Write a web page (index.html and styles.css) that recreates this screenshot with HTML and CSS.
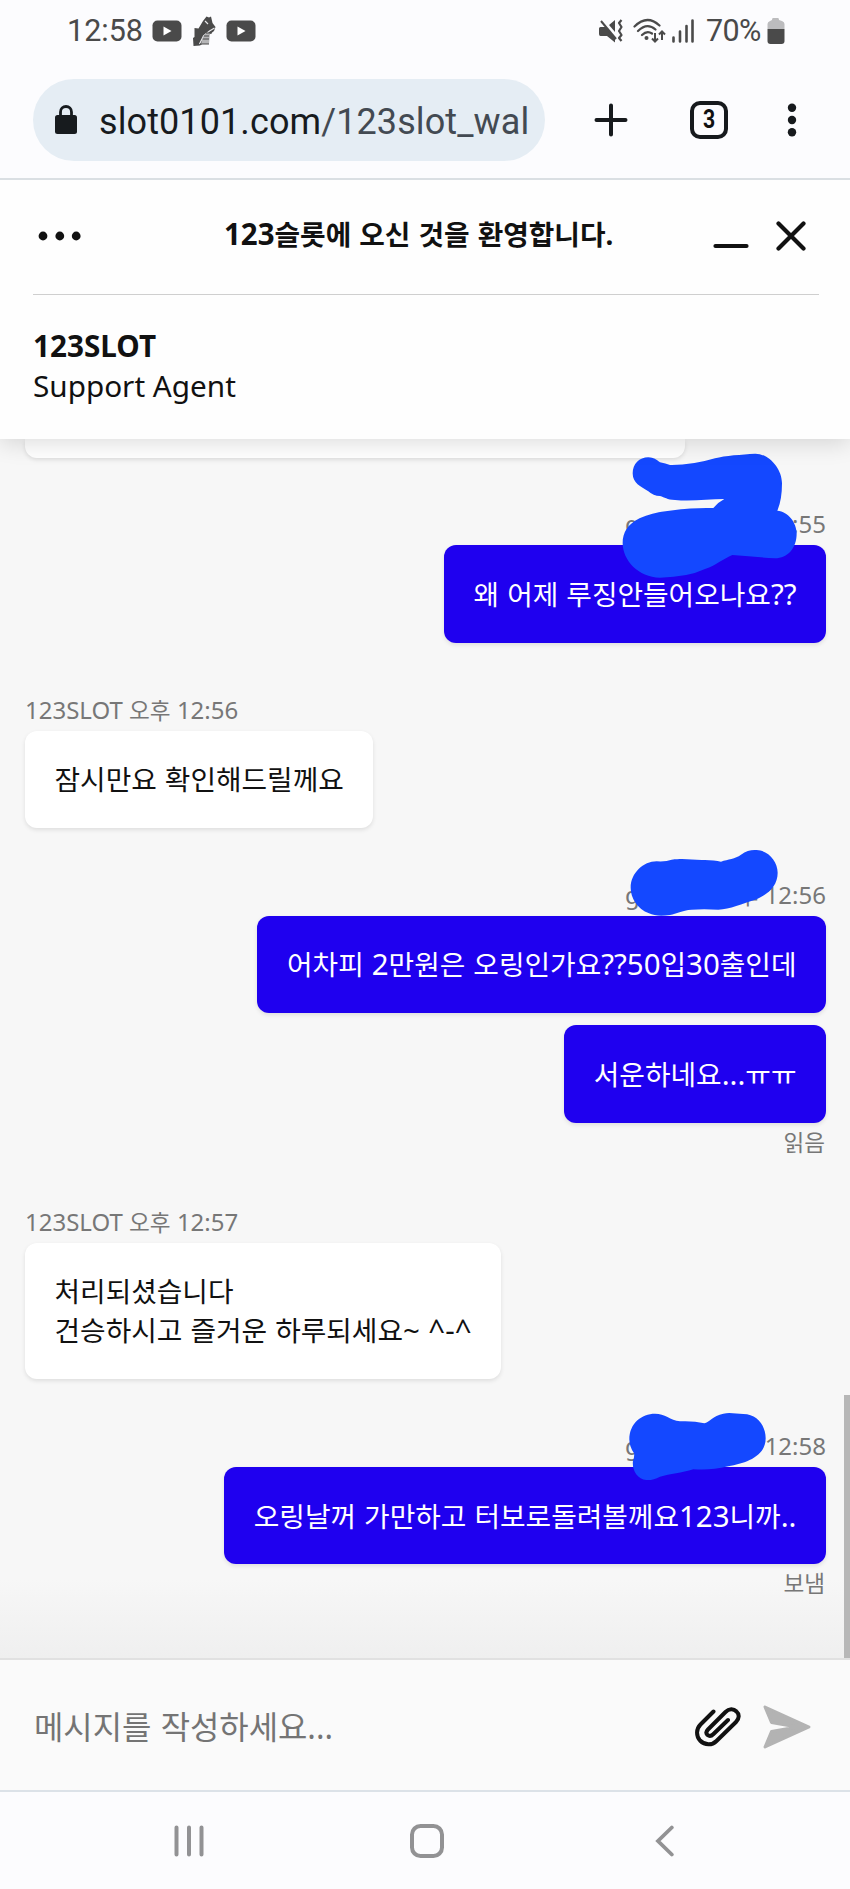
FILE: index.html
```html
<!DOCTYPE html>
<html lang="ko">
<head>
<meta charset="utf-8">
<title>123SLOT</title>
<link rel="stylesheet" href="styles.css">
</head>
<body>
<div class="phone">
  <div class="status-bar">
    <span class="clock">12:58</span>
    <svg class="yt" width="30" height="22" viewBox="0 0 30 22"><rect x=".5" y=".5" width="29" height="21" rx="5" fill="#4a4a4a"/><path d="M11.500 6.500v9l8-4.500z" fill="#fff"/></svg>
    <svg class="shoe" width="24" height="30" viewBox="0 0 24 30"><path d="M11 5 14.500.5 17 1.500 19 .5l1.500 6.500 3 4-1.500 4-5 4-4 7-5 3.500-6.500.5-.5-8 1.500-1V12l4 .5z" fill="#4a4a4a"/><path d="M22.500 12l-5 3-6 5-4 8M13 5l3 3" fill="none" stroke="#e8e8ea" stroke-width="1.200"/><path d="M18 17h-4l-3 4-2 7h8z" fill="#b5b5b7"/><path d="M20 17h-6M17 20h-5M17 23h-6M17 28H8" stroke="#4a4a4a" stroke-width="1.200"/></svg>
    <svg class="yt" width="30" height="22" viewBox="0 0 30 22"><rect x=".5" y=".5" width="29" height="21" rx="5" fill="#4a4a4a"/><path d="M11.500 6.500v9l8-4.500z" fill="#fff"/></svg>
    <div class="status-right">
      <svg class="mute" width="25" height="26" viewBox="0 0 25 26"><path d="M1.500 9h5L16 20v4.500L8 18H1.500Q0 18 0 16v-5.500Q0 9 1.500 9zM10 7l6-5v12z" fill="#4a4a4a"/><path d="M2 3l15 18" stroke="#4a4a4a" stroke-width="2"/><path d="M22.500 2l-2.500 3 2.500 4-2.500 4 2.500 4-2.500 3 2.500 3" fill="none" stroke="#4a4a4a" stroke-width="2.200" stroke-linejoin="round"/></svg>
      <svg class="wifi" width="33" height="26" viewBox="0 0 33 26"><path d="M1.500 8.500Q14-4 26.500 7.500M5 13Q14 4 22.500 11.500M9 17Q14 12 19 15.500" fill="none" stroke="#4a4a4a" stroke-width="2.200" stroke-linecap="round"/><circle cx="13.500" cy="20" r="2" fill="#4a4a4a"/><path d="M22 15v8.500m-3-3 3 3 3-3M29 22v-8.500m-3 3 3-3 3 3" fill="none" stroke="#4a4a4a" stroke-width="2"/></svg>
      <svg class="signal" width="22" height="24" viewBox="0 0 22 24"><path d="M1.500 18.500v4M8 12.500v10M14.500 7v15.500M20.500 1.500v21" stroke="#4a4a4a" stroke-width="2.600" stroke-linecap="round"/></svg>
      <span class="percent">70%</span>
      <svg class="battery" width="18" height="26" viewBox="0 0 18 26"><path d="M6 0h5q1 0 1 2l3 1q2.500 1 2.500 3v5H.5V6Q.5 4 3 3l2-1Q5 0 6 0z" fill="#bcbcbe"/><path d="M.5 11h17v12q0 3-3 3H3.500q-3 0-3-3z" fill="#4a4a4a"/></svg>
    </div>
  </div>

  <div class="browser-bar">
    <div class="address">
      <svg width="24" height="30" viewBox="0 0 24 30"><rect x="1" y="10" width="22" height="19" rx="2.500" fill="#171b1e"/><path d="M6.500 11V7a5.500 5.500 0 0 1 11 0v4" fill="none" stroke="#171b1e" stroke-width="2.800"/></svg>
      <span class="url">slot0101.com<span class="path">/123slot_wal</span></span>
    </div>
    <svg class="plus" width="34" height="34" viewBox="0 0 34 34"><path d="M17 2.500v29M2.500 17h29" stroke="#171a1d" stroke-width="4" stroke-linecap="round"/></svg>
    <div class="tabs"><span class="count">3</span></div>
    <svg class="kebab" width="10" height="34" viewBox="0 0 10 34"><g fill="#171a1d"><circle cx="5" cy="4.700" r="4.200"/><circle cx="5" cy="17" r="4.200"/><circle cx="5" cy="29.300" r="4.200"/></g></svg>
  </div>

  <header class="chat-header">
    <div class="title-row">
      <svg width="44" height="10" viewBox="0 0 44 10"><g fill="#111"><circle cx="5" cy="5" r="4.400"/><circle cx="21.800" cy="5" r="4.400"/><circle cx="38.200" cy="5" r="4.400"/></g></svg>
      <h1 class="title"><span class="latin">123</span>슬롯에 오신 것을 환영합니다.</h1>
      <svg class="minimize" width="36" height="30" viewBox="0 0 36 30"><path d="M2.500 25h31" stroke="#111" stroke-width="4.200" stroke-linecap="round"/></svg>
      <svg class="close" width="30" height="30" viewBox="0 0 30 30"><path d="M2.500 2.500l25 25m0-25-25 25" stroke="#111" stroke-width="4.200" stroke-linecap="round"/></svg>
    </div>
    <div class="agent">
      <strong>123SLOT</strong>
      <span>Support Agent</span>
    </div>
  </header>

  <main class="chat">
    <div class="bubble previous"></div>
    <section class="group sent">
      <div class="meta"><span>g</span><span><span class="hangul">오후</span> 12:55</span></div>
      <div class="bubble">왜 어제 루징안들어오나요<span class="latin">??</span></div>
      <svg class="scribble" viewBox="543 3 660 435"><path d="M623 100C623 72 643 52 670 52C687 53 693 58 705 67Q722 71 735 75Q800 76 870 55C900 46 950 44 990 41C1030 40 1071 85 1071 130Q1071 180 1057 212C1090 215 1115 248 1115 280C1115 325 1088 355 1050 355Q990 351 922 345C895 356 875 375 840 387Q790 411 705 413C640 413 593 360 593 310C593 240 665 224 710 215Q790 202 865 204Q880 186 898 177C850 177 800 185 750 180C725 179 720 172 705 168Q685 168 670 154C647 139 623 130 623 100Z"/></svg>
    </section>
    <section class="group">
      <div class="meta">123SLOT <span class="hangul">오후</span> 12:56</div>
      <div class="bubble">잠시만요 확인해드릴께요</div>
    </section>
    <section class="group sent">
      <div class="meta"><span>g</span><span><span class="hangul">오후</span> 12:56</span></div>
      <div class="bubble">어차피 <span class="latin">2</span>만원은 오링인가요<span class="latin">??50</span>입<span class="latin">30</span>출인데</div>
      <svg class="scribble" viewBox="543 -54 660 435"><path d="M617 173C617 130 655 94 695 94Q722 96 740 89C780 84 800 90 830 90Q865 89 888 95C910 87 930 87 948 74C964 61 980 59 995 60C1030 61 1058 95 1058 128C1058 165 1033 190 995 208C950 222 915 238 880 239Q835 236 800 239C770 241 755 251 735 255C710 259 688 258 672 250C637 236 617 205 617 173Z"/></svg>
      <div class="bubble follow">서운하네요<span class="latin">...</span>ㅠㅠ</div>
      <div class="receipt">읽음</div>
    </section>
    <section class="group">
      <div class="meta">123SLOT <span class="hangul">오후</span> 12:57</div>
      <div class="bubble">처리되셨습니다<br>건승하시고 즐거운 하루되세요<span class="latin">~ ^-^</span></div>
    </section>
    <section class="group sent">
      <div class="meta"><span>g</span><span><span class="hangul">오후</span> 12:58</span></div>
      <div class="bubble">오링날꺼 가만하고 터보로돌려볼께요<span class="latin">123</span>니까<span class="latin">..</span></div>
      <svg class="scribble" viewBox="543 -51 660 435"><path d="M613 178C613 130 650 101 690 101C720 101 735 120 765 124Q805 122 838 130C853 127 863 107 895 101C915 96 935 102 955 102C997 102 1022 138 1022 175C1022 230 962 250 910 259C870 269 840 270 805 268C770 279 735 282 705 290C690 298 677 301 664 300C636 297 620 269 624 242Q629 229 627 220Q613 200 613 178Z"/></svg>
      <div class="receipt">보냄</div>
    </section>
    <div class="scrollbar"></div>
  </main>

  <footer class="composer">
    <span class="placeholder">메시지를 작성하세요...</span>
    <svg class="clip" width="46" height="40" viewBox="0 0 46 40"><path d="M18.500 4.500 5.500 17.500C1 22 1 29 5 33.500C10 38.500 17 38.500 21.500 34L41 15C44.500 11.500 44.500 7 41.500 4.500C38.500 1.500 34 1.500 30.500 5L13 22.500C11 24.500 11 26.500 12.500 28C14.500 29.500 16.500 29 18.500 27L33 13" fill="none" stroke="#111" stroke-width="4" stroke-linecap="round" stroke-linejoin="round"/></svg>
    <svg class="send" width="48" height="44" viewBox="0 0 48 44"><path d="M2 2 46 22 2 42 8.500 26.500 34 22 8.500 17.500Z" fill="#b3b3b3" stroke="#b3b3b3" stroke-width="3" stroke-linejoin="round"/></svg>
  </footer>

  <nav class="nav-bar">
    <svg width="30" height="32" viewBox="0 0 30 32"><path d="M2.500 2.500v27M15 2.500v27M27.500 2.500v27" stroke="#929294" stroke-width="4" stroke-linecap="round"/></svg>
    <svg class="home" width="34" height="34" viewBox="0 0 34 34"><rect x="2" y="2" width="30" height="30" rx="8.500" fill="none" stroke="#929294" stroke-width="4"/></svg>
    <svg width="20" height="32" viewBox="0 0 20 32"><path d="M16.800 2.500 3 16l13.800 13.500" fill="none" stroke="#929294" stroke-width="3.800" stroke-linecap="round" stroke-linejoin="miter"/></svg>
  </nav>
</div>
</body>
</html>
```

FILE: styles.css
```css
* { box-sizing: border-box; }

body {
  margin: 0;
  background: #fcfcfe;
  color: #111;
  font-family: "Noto Sans", "Noto Sans CJK KR", sans-serif;
}

svg { display: block; flex: none; }

.phone {
  display: flex;
  flex-direction: column;
  width: 850px;
  height: 1889px;
  overflow: hidden;
}

.status-bar {
  display: flex;
  align-items: center;
  height: 62px;
  flex: none;
  padding: 0 65px 0 67px;
  color: #4a4a4a;
  font: 30.5px/36px Roboto, sans-serif;
}

.clock { width: 76px; margin-right: 9px; white-space: nowrap; }
.shoe { margin: 0 10px; }
.status-right { display: flex; align-items: center; margin-left: auto; }
.wifi { margin-left: 9px; }
.signal { margin: 0 12px 0 6px; }
.percent { width: 56px; margin-right: 5px; letter-spacing: -0.6px; white-space: nowrap; }

.browser-bar {
  display: flex;
  align-items: center;
  height: 118px;
  flex: none;
  padding: 0 53px 0 33px;
  border-bottom: 2px solid #dadfe3;
}

.address {
  display: flex;
  align-items: center;
  gap: 21px;
  width: 512px;
  height: 82px;
  padding-left: 21px;
  border-radius: 41px;
  background: #e5edf4;
}

.url {
  padding-top: 3px;
  font: 36px/44px Roboto, sans-serif;
  letter-spacing: 0.1px;
  color: #171b1e;
  white-space: nowrap;
}

.path { color: #434a52; }
.plus { margin-left: 49px; }

.tabs {
  display: flex;
  align-items: center;
  justify-content: center;
  width: 38px;
  height: 38px;
  margin: 0 auto 0 62px;
  border: 4px solid #171a1d;
  border-radius: 10px;
  font: bold 25px/30px Roboto, sans-serif;
}

.count { transform: scaleX(0.85); }

.chat-header {
  position: relative;
  z-index: 1;
  height: 259px;
  flex: none;
  padding: 0 31px 0 33px;
  background: #fefefe;
  box-shadow: 0 4px 22px rgba(0, 0, 0, 0.14);
  clip-path: inset(0 0 -40px 0);
}

.title-row {
  display: flex;
  align-items: center;
  height: 115px;
  padding: 0 13px 2px 5px;
  border-bottom: 1px solid #cfcfcf;
}

.title {
  width: 500px;
  margin: 0 0 0 142px;
  padding-bottom: 5px;
  font-size: 27.8px;
  font-weight: 700;
  line-height: 40px;
  word-spacing: 0.8px;
  white-space: nowrap;
}

.latin { font-size: 1.06em; line-height: 1; }
.minimize { margin-left: -11px; }
.close { margin-left: auto; }

.agent {
  display: flex;
  flex-direction: column;
  padding-top: 31px;
  font-size: 29.7px;
  line-height: 40px;
}

.chat {
  position: relative;
  display: flex;
  flex-direction: column;
  gap: 53px;
  height: 1219px;
  flex: none;
  padding: 0 24px 0 25px;
  background: linear-gradient(#f7f7f7 1140px, #efefef 1219px);
}

.bubble {
  width: fit-content;
  padding: 29.5px 29.5px 28.5px;
  border-radius: 12px;
  background: #fff;
  box-shadow: 0 2px 4px rgba(0, 0, 0, 0.1);
  font-size: 27.8px;
  line-height: 39.3px;
  word-spacing: 0.8px;
  white-space: nowrap;
}

.previous {
  width: 660px;
  height: 19px;
  padding: 0;
  margin-bottom: -0.7px;
  border-radius: 0 0 12px 12px;
}

.group { position: relative; display: flex; flex-direction: column; }
.sent { align-items: flex-end; }
.sent .bubble { background: #1f00ef; color: #fff; }
.sent .follow { margin-top: 12px; }

.meta {
  margin-bottom: 7px;
  color: #777;
  font-size: 24px;
  line-height: 28px;
  white-space: nowrap;
}

.hangul { font-size: 22.6px; line-height: 1; }
.sent .meta { display: flex; justify-content: space-between; width: 201px; }

.receipt {
  margin-top: 7px;
  padding-right: 1px;
  color: #777;
  font-size: 22.6px;
  line-height: 25px;
}

/* marker strokes laid over the sender name */
.scribble {
  position: absolute;
  top: -69px;
  right: 0;
  width: 220px;
  height: 145px;
  fill: #1448ff;
}

.scrollbar {
  position: absolute;
  right: 0;
  bottom: 0;
  width: 6px;
  height: 263px;
  background: #b7b7b7;
}

.composer {
  display: flex;
  align-items: center;
  height: 132px;
  flex: none;
  padding: 4px 39.5px 0 34px;
  border-top: 2px solid #e1e1e1;
  background: #fafafa;
}

.placeholder { color: #747474; font-size: 31.9px; line-height: 44px; word-spacing: 1px; }
.clip { margin-left: auto; }
.send { margin-left: 22px; }

.nav-bar {
  display: flex;
  align-items: center;
  justify-content: space-between;
  height: 99px;
  flex: none;
  padding: 0 175px 0 174px;
  border-top: 2px solid #dce2e8;
}

.home { margin-right: 6px; }
```
